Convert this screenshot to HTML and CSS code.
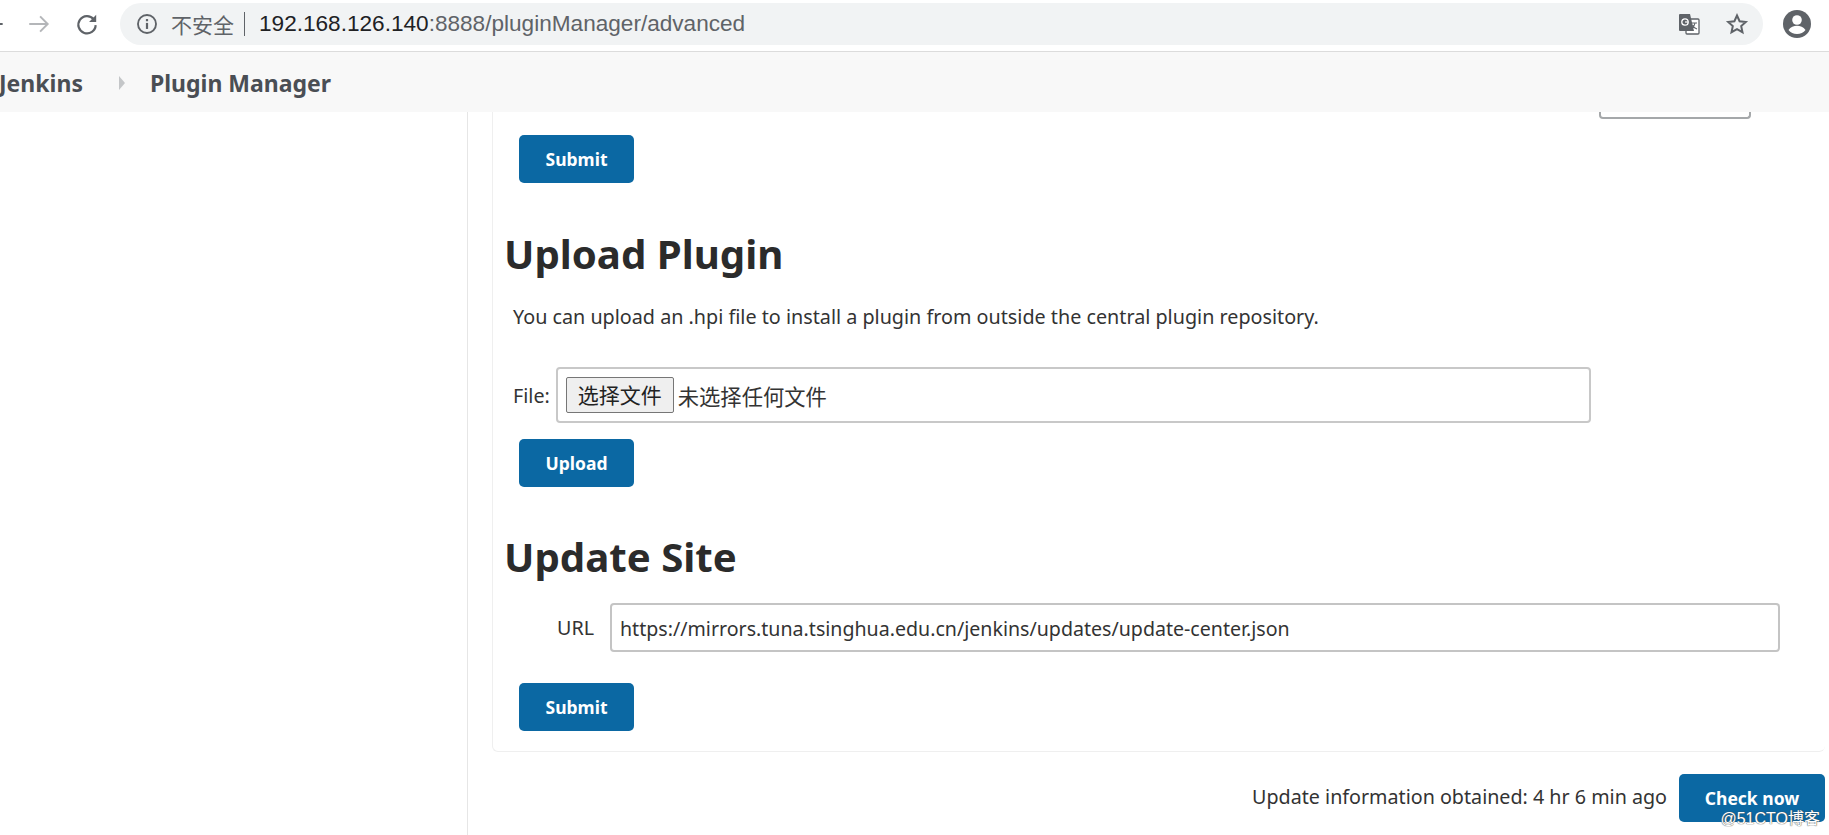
FILE: index.html
```html
<!DOCTYPE html>
<html lang="en">
<head>
    <meta charset="UTF-8">
    <title>Plugin Manager</title>
    <link rel="stylesheet" href="styles.css">
</head>
<body>
    <!-- Browser toolbar -->
    <div class="toolbar">
        <div class="nav-icons">
            <svg class="nav-back" width="26" height="26" viewBox="0 0 24 24"><path d="M20 12H5M11 5l-7 7 7 7" fill="none" stroke="#5f6368" stroke-width="1.8"/></svg>
            <svg class="nav-forward" width="26" height="26" viewBox="0 0 24 24"><path d="M3 12h17M13 5l7 7-7 7" fill="none" stroke="#b4b6b9" stroke-width="1.8"/></svg>
            <svg class="nav-reload" width="26" height="26" viewBox="0 0 24 24"><path d="M18.2 7.6A8 8 0 1 0 20 13" fill="none" stroke="#5f6368" stroke-width="2"/><path d="M20.5 3.5v6.6h-6.6z" fill="#5f6368"/></svg>
        </div>
        <div class="omnibox">
            <svg width="22" height="22" viewBox="0 0 20 20"><circle cx="10" cy="10" r="8.2" fill="none" stroke="#5f6368" stroke-width="1.7"/><rect x="9" y="9" width="2" height="5.5" fill="#5f6368"/><rect x="9" y="5.5" width="2" height="2" fill="#5f6368"/></svg>
            <span class="insecure">不安全</span>
            <span class="omni-sep"></span>
            <span class="url"><b>192.168.126.140</b>:8888/pluginManager/advanced</span>
            <svg class="translate-icon" width="24" height="24" viewBox="0 0 24 24">
                <rect x="9" y="7" width="13" height="15" rx="1" fill="#fff" stroke="#5f6368" stroke-width="1.3"/>
                <path d="M3 2h10l4 17H3a1 1 0 0 1-1-1V3a1 1 0 0 1 1-1z" fill="#5f6368"/>
                <circle cx="8" cy="10" r="3.2" fill="none" stroke="#fff" stroke-width="1.3"/>
                <path d="M8 10h3.2" stroke="#fff" stroke-width="1.2"/>
                <path d="M15 11h5M18 11c-.5 3-2 5-3.5 6M15.500 13c.8 2 2.500 3.500 4.500 4" fill="none" stroke="#5f6368" stroke-width="1.100"/>
            </svg>
            <svg class="star-icon" width="24" height="24" viewBox="0 0 24 24"><path d="M12 3.500l2.600 5.700 6.200.7-4.600 4.200 1.300 6.100L12 17.100l-5.500 3.100 1.300-6.100-4.600-4.200 6.200-.7z" fill="none" stroke="#5f6368" stroke-width="2"/></svg>
        </div>
        <svg class="avatar" width="30" height="30" viewBox="0 0 30 30"><circle cx="15" cy="15" r="14" fill="#5f6368"/><circle cx="15" cy="11" r="4.800" fill="#fff"/><path d="M6.500 21c2-3.200 5.300-4.200 8.500-4.200s6.500 1 8.500 4.200c-2 2.600-5 4-8.500 4s-6.500-1.400-8.500-4z" fill="#fff"/></svg>
    </div>

    <!-- Breadcrumb bar -->
    <div class="breadcrumbs">
        <a class="crumb crumb-home" href="#">Jenkins</a>
        <span class="crumb-arrow"></span>
        <a class="crumb" href="#">Plugin Manager</a>
    </div>

    <div class="page">
        <div class="side-panel"></div>
        <div class="main-panel">
            <div class="card">
                <div class="cut-off-row"><span class="cut-off-input"></span></div>
                <button class="jenkins-btn">Submit</button>

                <h1>Upload Plugin</h1>
                <p class="intro">You can upload an .hpi file to install a plugin from outside the central plugin repository.</p>
                <div class="file-row">
                    <label class="file-label">File:</label>
                    <div class="file-box">
                        <span class="file-btn">选择文件</span>
                        <span class="file-none">未选择任何文件</span>
                    </div>
                </div>
                <button class="jenkins-btn">Upload</button>

                <h1 class="site-title">Update Site</h1>
                <div class="url-row">
                    <label class="url-label">URL</label>
                    <input class="url-input" type="text" value="https://mirrors.tuna.tsinghua.edu.cn/jenkins/updates/update-center.json">
                </div>
                <button class="jenkins-btn">Submit</button>
            </div>
            <div class="update-row">
                <span class="update-info">Update information obtained: 4 hr 6 min ago</span>
                <button class="jenkins-btn check-btn">Check now</button>
            </div>
        </div>
    </div>

    <div class="watermark">@51CTO博客</div>
</body>
</html>
```

FILE: styles.css
```css
html, body { margin: 0; padding: 0; height: 835px; overflow: hidden; background-color: #fff; font-family: "Noto Sans", "Noto Sans CJK SC", sans-serif; color: #333; }
.toolbar { height: 52px; display: flex; align-items: center; box-sizing: border-box; padding-bottom: 3px; border-bottom: 1px solid #dcdcdc; }
.nav-icons { display: flex; align-items: center; width: 120px; flex: none; }
.nav-back { margin-left: -19px; }
.nav-forward { margin-left: 19px; }
.nav-reload { margin-left: 22px; }
.omnibox { display: flex; align-items: center; width: 1643px; height: 42px; flex: none; box-sizing: border-box; padding: 0 14px 0 16px; background-color: #f1f3f4; border-radius: 21px; }
.insecure { margin-left: 13px; font-size: 21px; color: #5f6368; font-family: "Noto Sans CJK SC", sans-serif; }
.omni-sep { width: 1px; height: 24px; margin: 0 14px 0 10px; background-color: #5f6368; }
.url { flex: 1; font-family: "Liberation Sans", sans-serif; font-size: 22.6px; color: #5f6368; }
.url b { font-weight: normal; color: #202124; }
.translate-icon { margin-right: 24px; }
.avatar { margin-left: 19px; flex: none; }
.breadcrumbs { height: 60px; display: flex; align-items: center; box-sizing: border-box; padding-top: 2px; background-color: #f8f8f8; }
.crumb { font-size: 23px; font-weight: 700; color: #4a4e54; text-decoration: none; }
.crumb-home { margin-left: -1px; }
.crumb-arrow { width: 0; height: 0; margin: 0 25px 0 36px; border-left: 6px solid #c4c6c8; border-top: 7px solid transparent; border-bottom: 7px solid transparent; }
.page { display: flex; height: 723px; }
.side-panel { width: 467px; flex: none; border-right: 1px solid #e6e6e6; }
.main-panel { flex: 1; padding-left: 24px; padding-right: 4px; }
.card { box-sizing: border-box; height: 640px; padding: 0 0 0 26px; border: 1px solid #efefef; border-top: none; border-right: none; border-radius: 0 0 6px 6px; }
.cut-off-row { height: 7px; display: flex; justify-content: flex-end; padding-right: 74px; overflow: hidden; }
.cut-off-input { width: 152px; height: 7px; box-sizing: border-box; border: 2px solid #a5a8aa; border-top: none; border-radius: 0 0 4px 4px; }
.jenkins-btn { display: block; width: 115px; height: 48px; margin: 16px 0 0; border: none; border-radius: 5px; background-color: #0b68a3; color: #fff; font-family: "Noto Sans", sans-serif; font-size: 17.500px; font-weight: 700; padding: 0; }
h1 { margin: 41px 0 0 -15px; font-size: 40.2px; line-height: 60px; font-weight: 700; color: #2b2b2b; }
.intro { margin: 19px 0 0 -6px; font-size: 19.75px; line-height: 28px; color: #333; }
.file-row { display: flex; align-items: center; margin: 36px 0 0 -6px; height: 56px; }
.file-label { font-size: 19.7px; margin-right: 6px; }
.file-box { display: flex; align-items: center; box-sizing: border-box; width: 1035px; height: 56px; padding-left: 8px; border: 2px solid #c8c8c8; border-radius: 4px; }
.file-btn { box-sizing: border-box; width: 108px; height: 36px; line-height: 33px; text-align: center; border: 1px solid #767676; border-radius: 2px; background-color: #efefef; font-size: 21px; font-family: "Noto Sans CJK SC", sans-serif; color: #222; }
.file-none { margin-left: 4px; font-size: 21.3px; font-family: "Noto Sans CJK SC", sans-serif; color: #333; }
h1.site-title { margin-top: 40px; }
.url-row { display: flex; align-items: center; margin-top: 16px; }
.url-label { width: 91px; box-sizing: border-box; text-align: right; padding-right: 16px; font-size: 19.7px; color: #333; }
.url-input { box-sizing: border-box; width: 1170px; height: 49px; padding: 2px 8px 0; border: 2px solid #c4c4c4; border-radius: 4px; font-family: "Noto Sans", sans-serif; font-size: 19.6px; color: #333; }
.url-row + .jenkins-btn { margin-top: 31px; }
.update-row { display: flex; justify-content: flex-end; align-items: center; gap: 12px; margin-top: 22px; }
.update-info { font-size: 19.7px; color: #333; margin-bottom: 4px; }
.check-btn { width: 146px; margin: 0; }
.watermark { position: absolute; right: 9px; bottom: 6px; font-family: "Liberation Sans", "Noto Sans CJK SC", sans-serif; font-size: 16px; color: #fff; text-shadow: 0 0 1px #555, 0 0 1px #555; }
```
